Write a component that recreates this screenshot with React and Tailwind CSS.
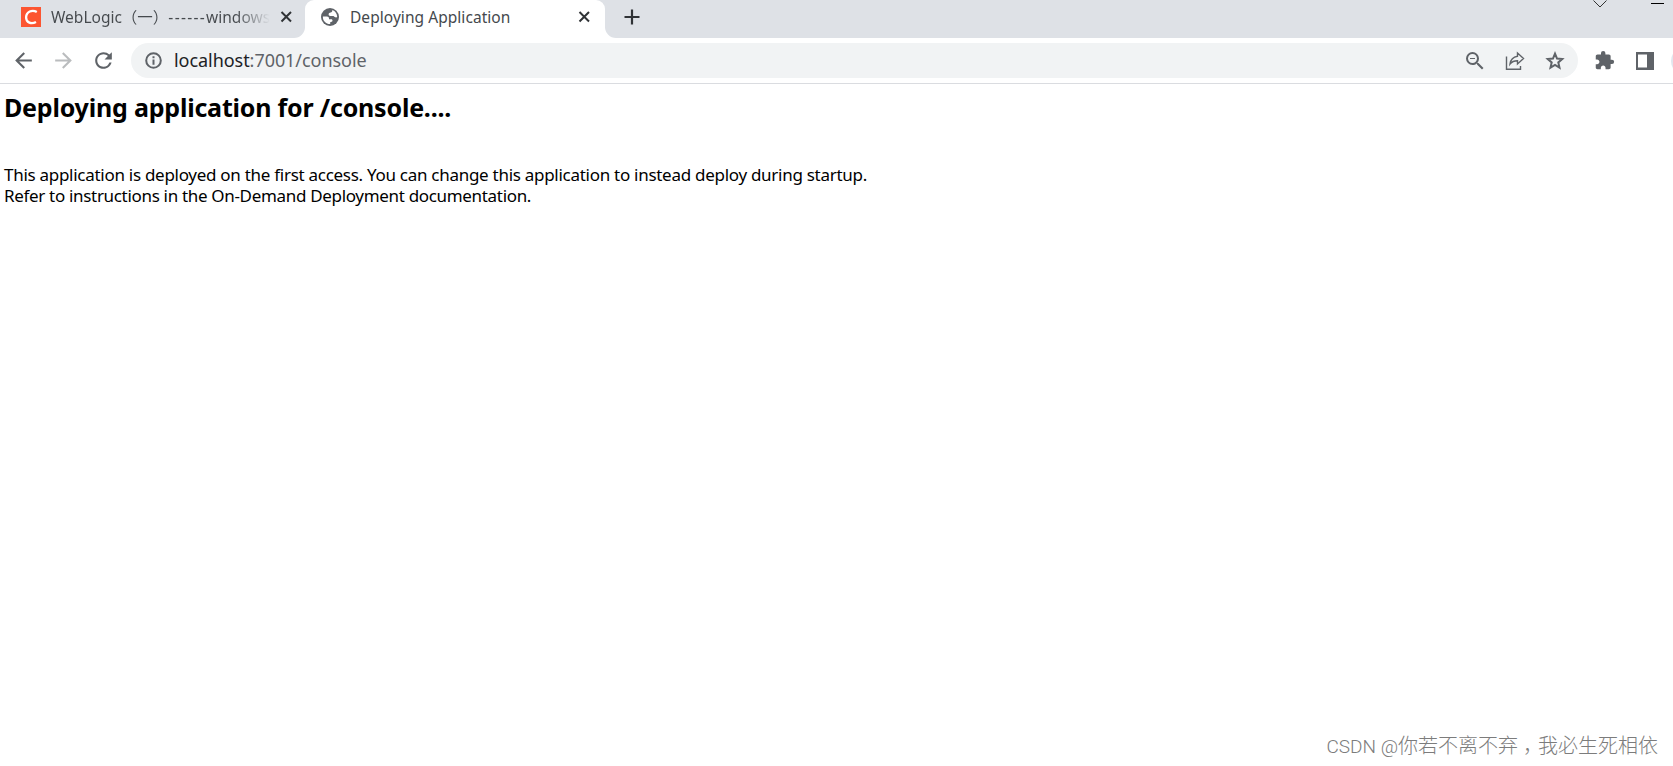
import { MdArrowBack, MdArrowForward, MdRefresh, MdZoomOut, MdExtension } from 'react-icons/md';

const CloseIcon = () => (
  <svg width="18" height="18" viewBox="0 0 18 18" fill="none" stroke="#303336" strokeWidth="2">
    <path d="M4.500 4L14 13.500M14 4L4.500 13.500" />
  </svg>
);

const PlusIcon = () => (
  <svg width="16" height="16" viewBox="0 0 16 16" className="mt-[9px] ml-[4px]" fill="none" stroke="#303336" strokeWidth="2.2">
    <path d="M8 0.500V15.500M0.500 8H15.500" />
  </svg>
);

const GlobeIcon = () => (
  <svg width="18" height="18" viewBox="0 0 18 18">
    <circle cx="9" cy="9" r="9" fill="#5f6368" />
    <path fill="#fff" d="M11.300 2C14.300 3 16.200 5.700 16.200 9C15.500 9.600 14.500 9.500 13.700 8.900L12.500 8H9.300C8.300 8 7.500 7.300 7.600 6.300C7.700 5.300 8.500 4.700 9.600 4.600C10.800 4.500 11.500 3.500 11.300 2Z" />
    <path fill="#fff" d="M1.900 8.500H6C7.200 8.500 8 9.300 8 10.400V11.300H10.200C11.200 11.300 11.600 12 11.500 12.800C11.300 13.900 10.200 14.100 9.200 14.200V16.100C5 16.200 1.500 12.600 1.900 8.500Z" />
  </svg>
);

const InfoIcon = () => (
  <svg width="17" height="17" viewBox="0 0 17 17" fill="none" stroke="#5f6368" strokeWidth="2">
    <circle cx="8.500" cy="8.500" r="7.300" />
    <path d="M8.500 7.500V12.800M8.500 4.200V6.200" />
  </svg>
);

const ShareIcon = () => (
  <svg width="20" height="20" viewBox="0 0 20 20" fill="none" stroke="#5f6368" strokeWidth="1.4">
    <path d="M1.500 5.500V18.300H15.500V15" />
    <path d="M12.500 2L18.500 7.500L12.500 13V9.800C9 9.800 6.800 10.800 5 13C5.600 8.800 8.500 5.800 12.500 5.200Z" />
  </svg>
);

const StarIcon = () => (
  <svg width="22" height="22" viewBox="0 0 24 24" fill="none" stroke="#5f6368" strokeWidth="2.2">
    <path d="M12 4L14.200 9.300L19.900 9.800L15.600 13.550L16.900 19.150L12 16.200L7.100 19.150L8.400 13.550L4.100 9.800L9.800 9.300Z" />
  </svg>
);

const SidePanelIcon = () => (
  <svg width="18" height="18" viewBox="0 0 18 18">
    <path fill="#5f6368" fillRule="evenodd" d="M0 0H18V18H0ZM2 2.500V15.500H11V2.500Z" />
  </svg>
);

const CsdnIcon = () => (
  <svg width="20" height="20" viewBox="0 0 20 20">
    <rect width="20" height="20" fill="#fc5531" />
    <path d="M15.800 5C11 2.200 5.300 4.800 5.100 10.400C5 15.900 10.500 17.400 15 15" fill="none" stroke="#fff" strokeWidth="2.3" />
  </svg>
);

const TabStrip = () => (
  <div className="flex h-[38px] bg-[#dee1e6] text-[#45494d]">
    <div className="flex w-[305px] bg-white">
      <div className="flex w-full items-center rounded-br-[11px] bg-[#dee1e6] pb-1 pl-[21px] text-[15.5px]">
        <CsdnIcon />
        <div className="mt-[2px] ml-[10px] w-[219px] overflow-hidden whitespace-pre bg-linear-to-r from-[#45494d] from-84% to-[#dee1e6] bg-clip-text text-transparent">
          WebLogic（一）<span className="tracking-[1.3px]">------</span>windows
        </div>
        <div className="ml-[7px]"><CloseIcon /></div>
      </div>
    </div>
    <div className="flex w-[300px] items-center rounded-t-[9px] bg-white pb-1 pl-[16px] text-[15.5px]">
      <GlobeIcon />
      <div className="mt-[2px] ml-[11px] w-[225px] tracking-[0.05px]">Deploying Application</div>
      <CloseIcon />
    </div>
    <div className="flex flex-1 bg-white">
      <div className="flex flex-1 items-start rounded-bl-[11px] bg-[#dee1e6] pl-[15px]">
        <PlusIcon />
        <svg width="14" height="9" viewBox="0 0 14 9" className="ml-auto" fill="none" stroke="#333">
          <path d="M0.500 0.500L7 7L13.500 0.500" />
        </svg>
        <div className="mt-[3px] mr-[9px] ml-[44px] h-px w-[13px] bg-black" />
      </div>
    </div>
  </div>
);

const Toolbar = () => (
  <div className="flex h-[46px] items-center border-b border-[#dadce0] bg-white pl-[11px] text-[#5f6368]">
    <MdArrowBack size={25} className="shrink-0" />
    <MdArrowForward size={25} className="ml-[15px] shrink-0 text-[#babcbe]" />
    <MdRefresh size={25} className="ml-[15px] shrink-0" />
    <div className="ml-[15px] flex h-[35px] w-[1447px] shrink-0 items-center rounded-full bg-[#f1f3f4] pl-[14px]">
      <InfoIcon />
      <div className="ml-[12px] text-[18px] tracking-[-0.05px]">
        <span className="text-[#202124]">localhost</span>:7001/console
      </div>
      <MdZoomOut size={24} className="ml-auto" />
      <div className="ml-[18px]"><ShareIcon /></div>
      <div className="mr-[12px] ml-[19px]"><StarIcon /></div>
    </div>
    <MdExtension size={21} className="ml-[16px] shrink-0" />
    <div className="ml-[21px] shrink-0"><SidePanelIcon /></div>
    <div className="ml-[17px] h-[28px] w-[28px] shrink-0 rounded-full bg-[#e1e6ee]" />
  </div>
);

const App = () => {
  return (
    <div className="flex h-[766px] w-[1673px] flex-col overflow-hidden bg-white font-['Noto_Sans','Noto_Sans_CJK_SC',sans-serif]">
      <TabStrip />
      <Toolbar />

      {/* Page content */}
      <div className="flex-1 pl-[4px] text-black">
        <h2 className="mt-[5px] w-fit text-[25px] leading-[36px] font-bold tracking-[-0.2px]">Deploying application for /console....</h2>
        <p className="mt-[39px] w-fit text-[17px] leading-[21px] tracking-[-0.28px] whitespace-nowrap">
          This application is deployed on the first access. You can change this application to instead deploy during startup.
          <br />
          <span className="tracking-[-0.32px]">Refer to instructions in the On-Demand Deployment documentation.</span>
        </p>
      </div>

      {/* Watermark */}
      <div className="mr-[15px] mb-[4px] self-end font-['Roboto','Noto_Sans_CJK_SC',sans-serif] text-[20px] leading-[30px] font-light text-[#7c7c7c]">
        <span className="text-[19px]">CSDN @</span>你若不离不弃<span className="px-[5px] [font-feature-settings:'halt']">，</span>我必生死相依
      </div>
    </div>
  );
};

export default App;
